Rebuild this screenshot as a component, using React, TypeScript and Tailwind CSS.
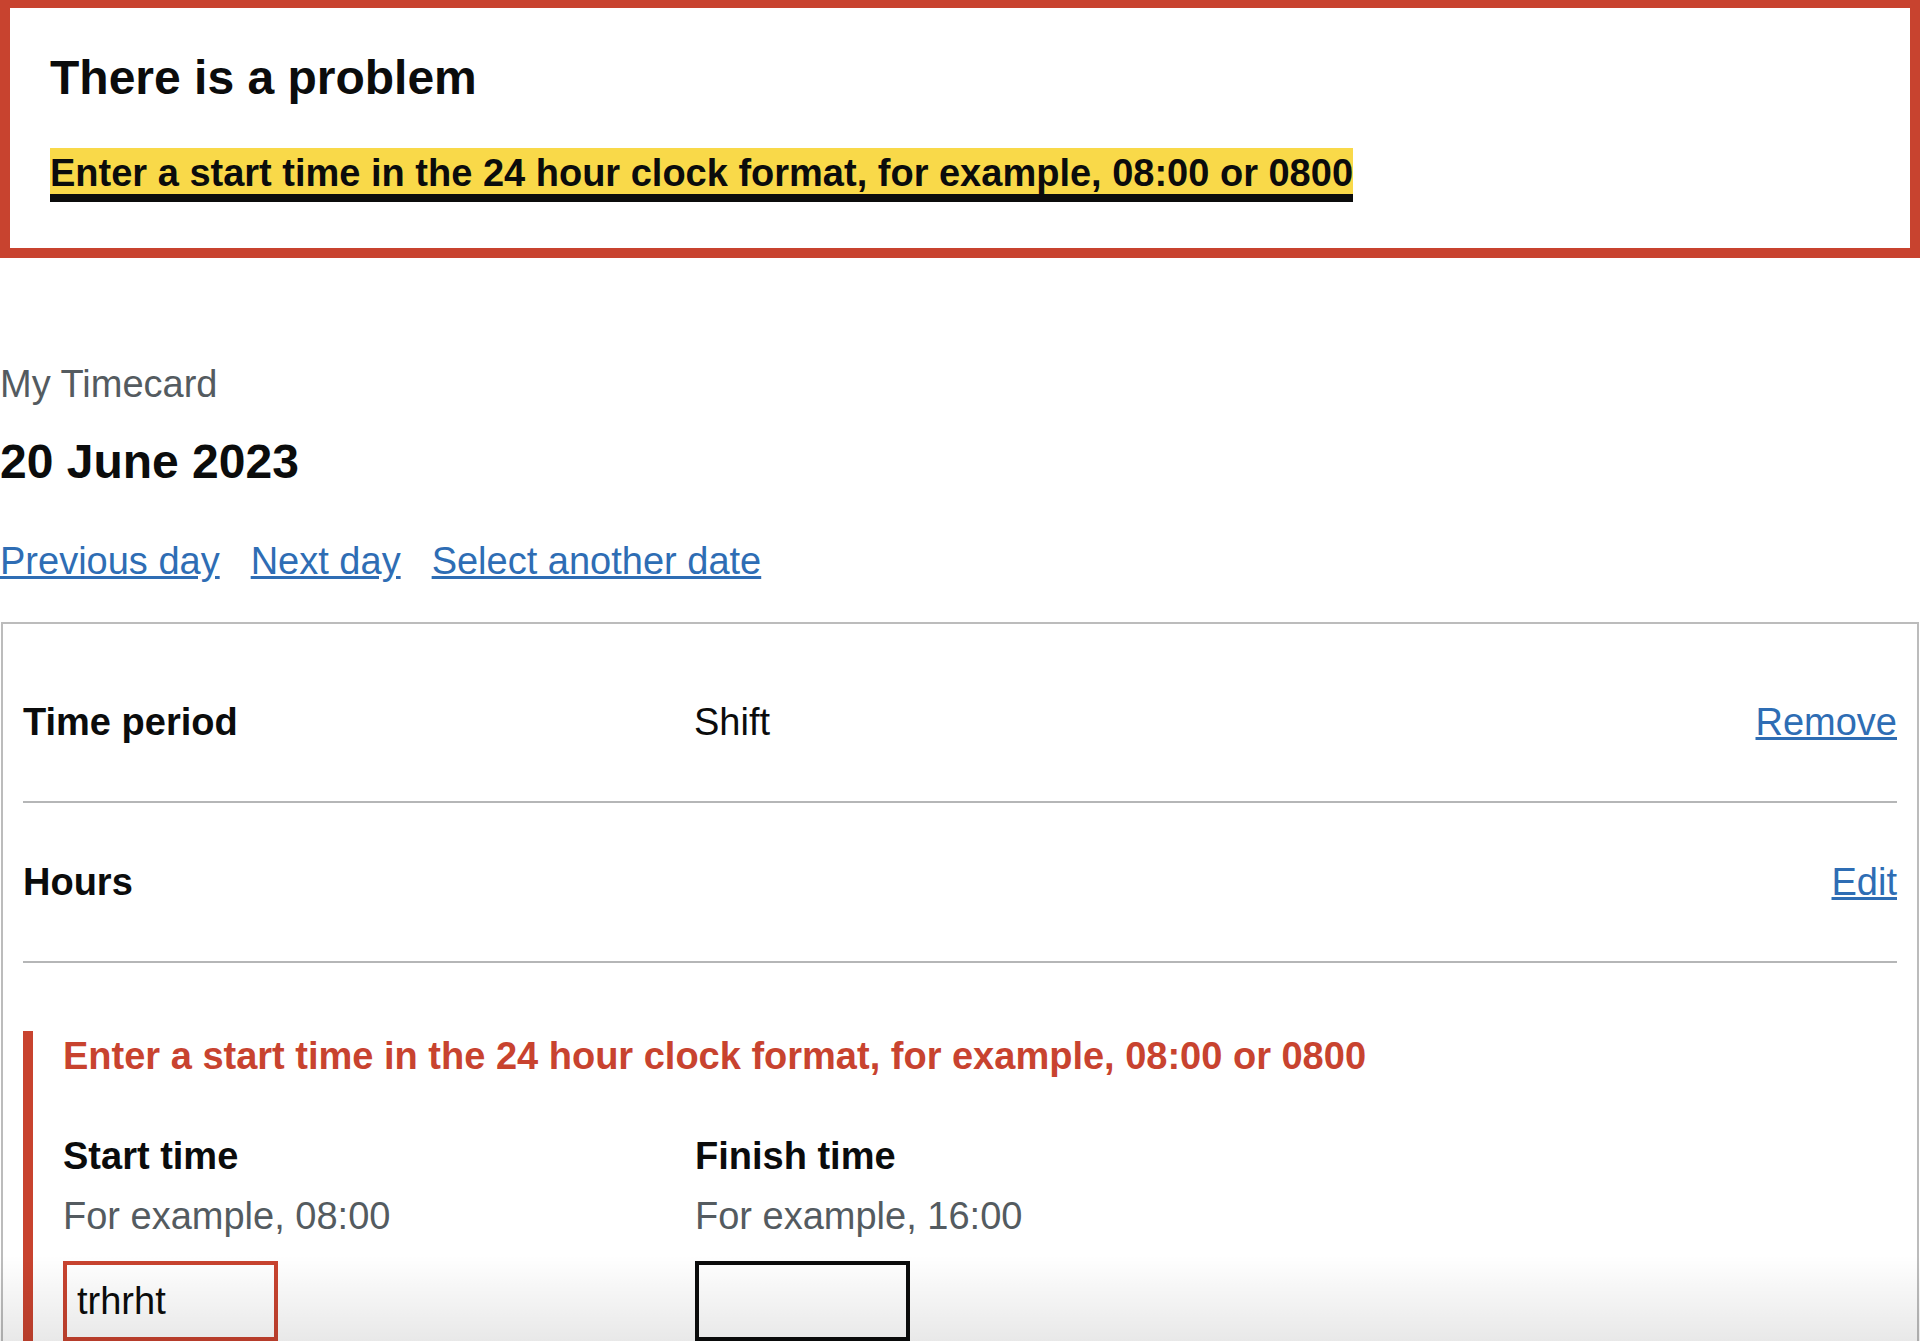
import React from "react";

export default function App() {
  return (
    <div className="relative h-[1341px] overflow-hidden bg-white font-['Liberation_Sans',Arial,sans-serif] text-[#0b0c0c]">
      {/* Error summary */}
      <div className="-mt-[2px] border-[10px] border-[#c8432f] px-[40px] pb-[50px] pt-[40px]">
        <h2 className="mb-[40px] text-[48px] font-bold leading-[60px]">There is a problem</h2>
        <ul>
          <li className="text-[38px] font-bold leading-[50px]">
            <a
              href="#start-time"
              className="bg-[#f9d949] text-[#0b0c0c] no-underline shadow-[0_-4px_#f9d949,0_8px_#0b0c0c]"
            >
              Enter a start time in the 24 hour clock format, for example, 08:00 or 0800
            </a>
          </li>
        </ul>
      </div>

      {/* Caption and heading */}
      <span className="mt-[101px] block text-[38px] leading-[50px] text-[#545b60]">My Timecard</span>
      <h1 className="mt-[23px] text-[48px] font-bold leading-[60px]">20 June 2023</h1>

      {/* Day navigation */}
      <div className="mt-[44px] flex gap-[31px] text-[38px] leading-[50px] text-[#2e6db4]">
        <a href="#" className="underline">Previous day</a>
        <a href="#" className="underline">Next day</a>
        <a href="#" className="underline">Select another date</a>
      </div>

      {/* Card */}
      <div className="ml-[1px] mr-[1px] mt-[36px] border-2 border-[#bcbcbc] px-[20px] pb-[200px] pt-[19px]">
        <div className="flex items-start border-b-2 border-[#b5b6b7] py-[54px] text-[38px] leading-[50px]">
          <div className="w-[671px] shrink-0 font-bold">Time period</div>
          <div className="flex-1">Shift</div>
          <a href="#" className="text-[#2e6db4] underline">Remove</a>
        </div>
        <div className="flex items-start border-b-2 border-[#b5b6b7] py-[54px] text-[38px] leading-[50px]">
          <div className="w-[671px] shrink-0 font-bold">Hours</div>
          <div className="flex-1"></div>
          <a href="#" className="text-[#2e6db4] underline">Edit</a>
        </div>

        {/* Error form group */}
        <div className="mt-[68px] border-l-[10px] border-[#c8432f] pl-[30px]">
          <p className="mb-[50px] text-[38px] font-bold leading-[50px] text-[#c8432f]">
            Enter a start time in the 24 hour clock format, for example, 08:00 or 0800
          </p>
          <div className="grid grid-cols-[632px_1fr]">
            <div>
              <label htmlFor="start-time" className="mb-[10px] block text-[38px] font-bold leading-[50px]">
                Start time
              </label>
              <div className="mb-[20px] text-[38px] leading-[50px] text-[#545b60]">For example, 08:00</div>
              <input
                id="start-time"
                type="text"
                defaultValue="trhrht"
                className="box-border block h-[80px] w-[215px] border-4 border-[#c8432f] bg-white px-[10px] text-[38px] leading-[50px] text-[#0b0c0c] outline-none"
              />
            </div>
            <div>
              <label htmlFor="finish-time" className="mb-[10px] block text-[38px] font-bold leading-[50px]">
                Finish time
              </label>
              <div className="mb-[20px] text-[38px] leading-[50px] text-[#545b60]">For example, 16:00</div>
              <input
                id="finish-time"
                type="text"
                className="box-border block h-[80px] w-[215px] border-4 border-[#0b0c0c] bg-white px-[10px] text-[38px] leading-[50px] text-[#0b0c0c] outline-none"
              />
            </div>
          </div>
        </div>
      </div>

      {/* Bottom fade of the screenshot */}
      <div className="pointer-events-none absolute bottom-0 left-0 right-0 h-[86px] bg-linear-to-b from-black/0 to-black/[0.09]" />
    </div>
  );
}
